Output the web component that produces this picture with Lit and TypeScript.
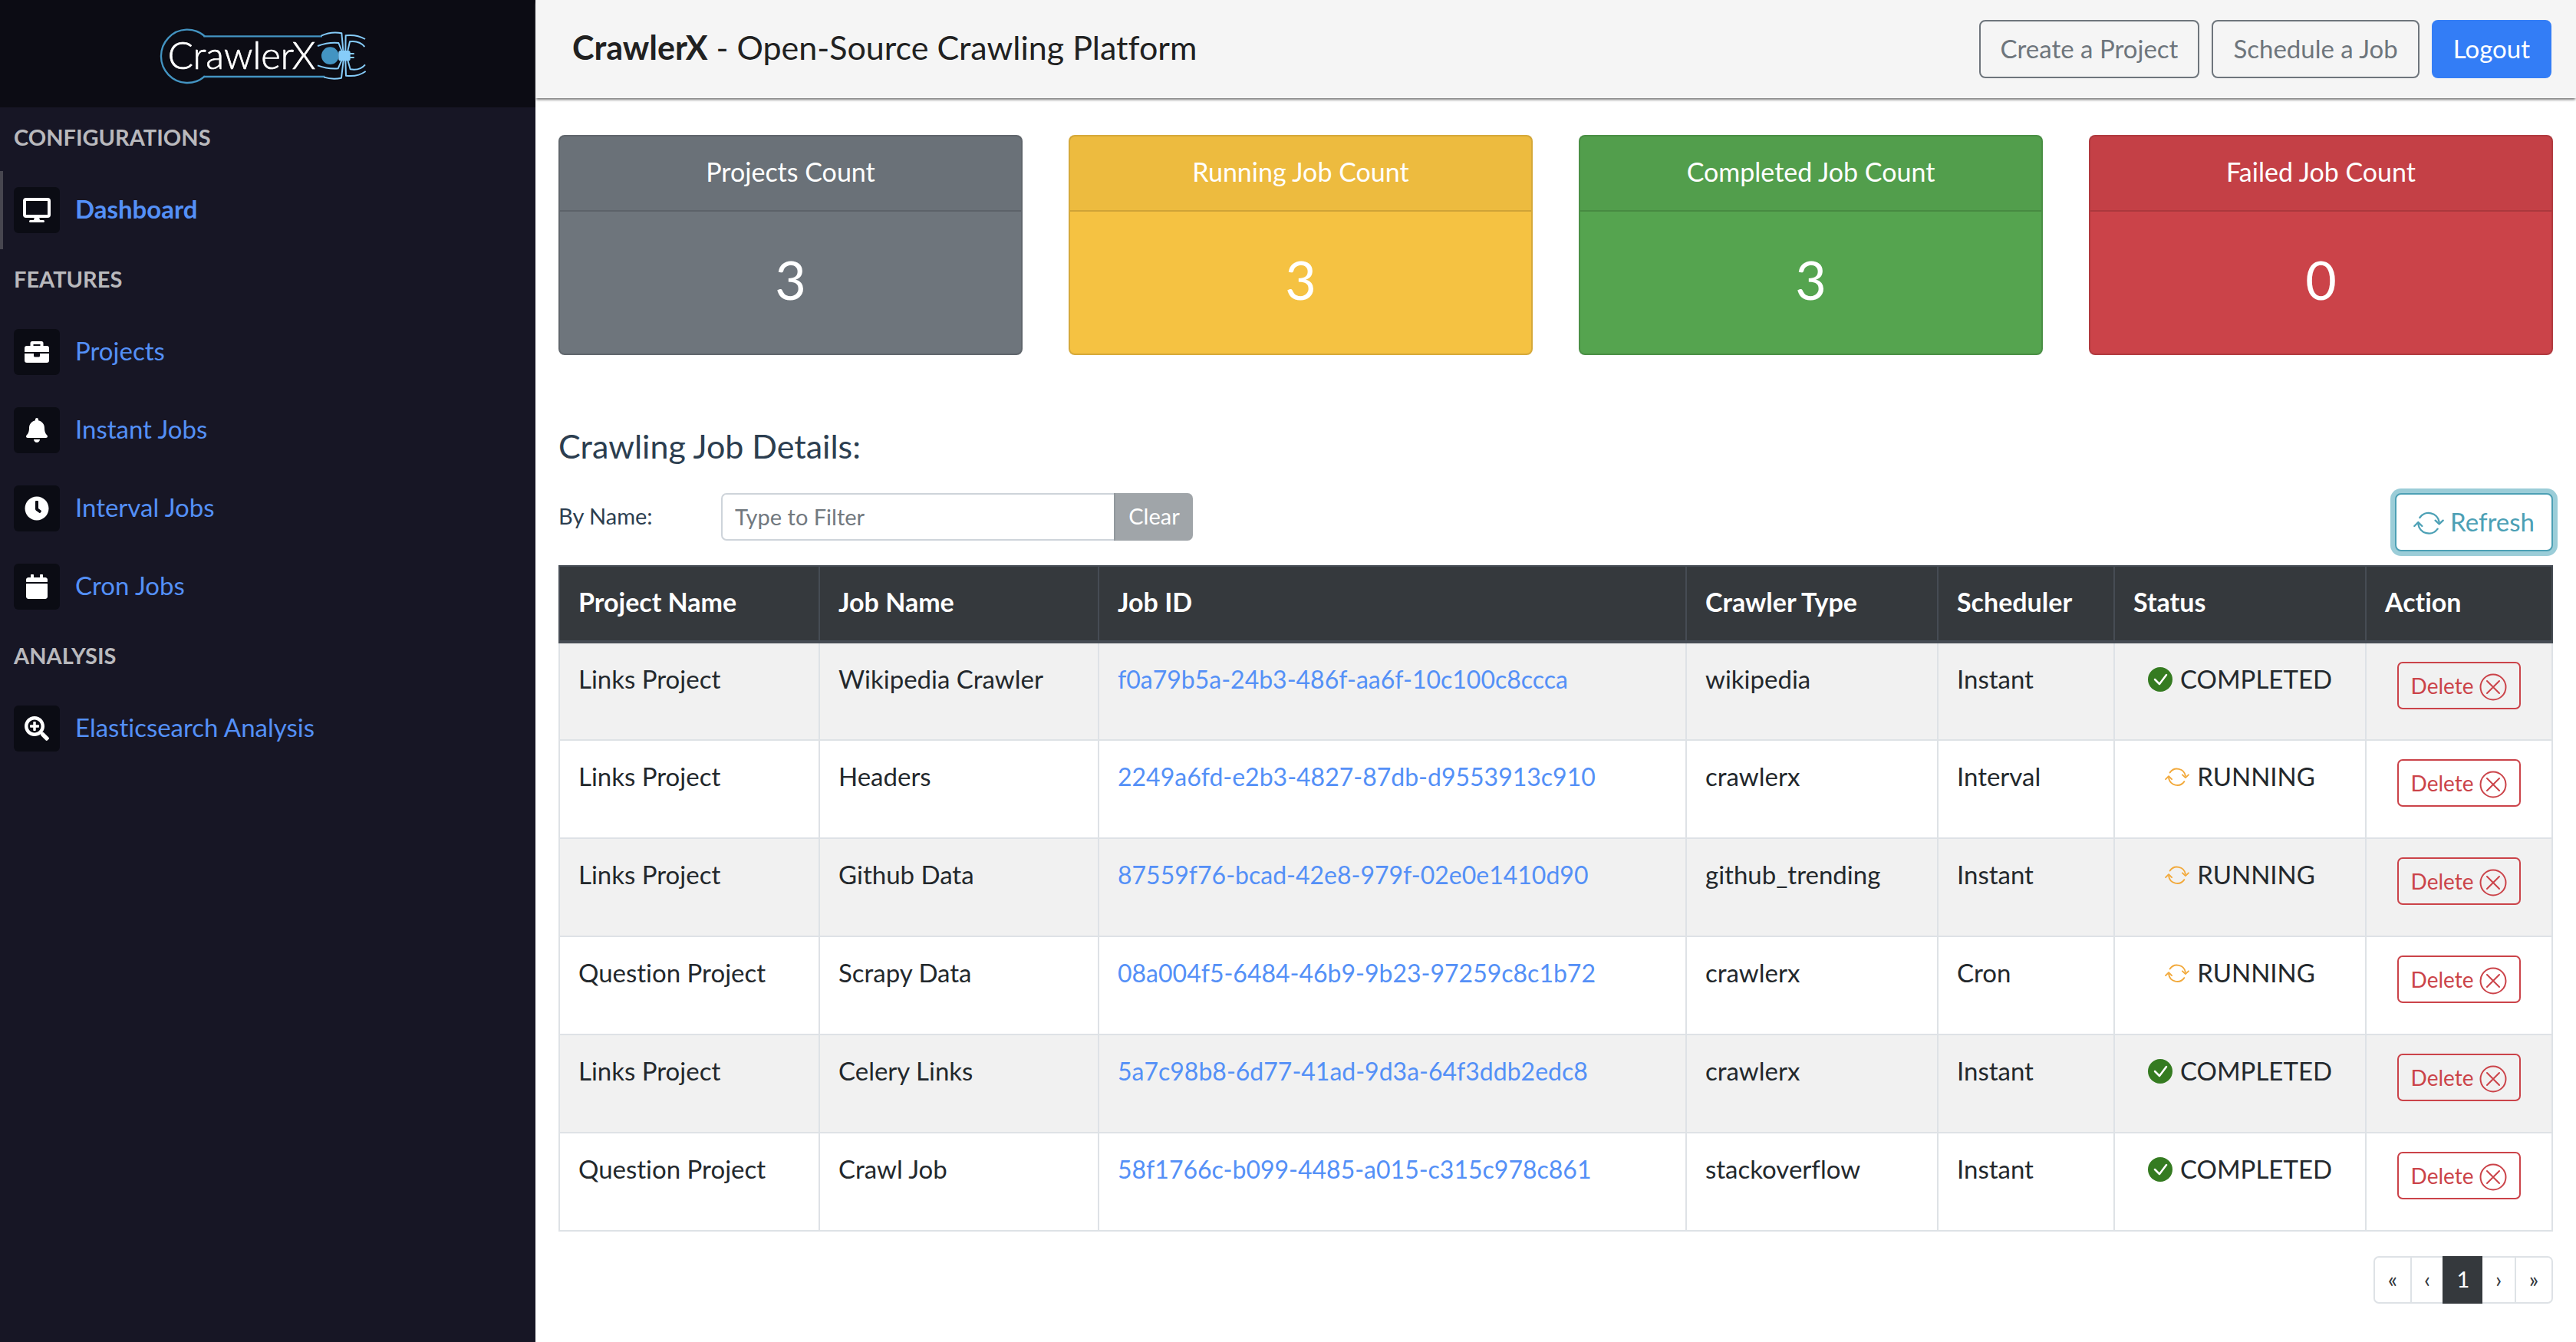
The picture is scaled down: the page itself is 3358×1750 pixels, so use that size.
import { LitElement, html, svg, css, nothing, type TemplateResult } from "lit";
import { customElement, property, state } from "lit/decorators.js";
import { classMap } from "lit/directives/class-map.js";

type Status = "COMPLETED" | "RUNNING";

interface Job {
  project: string;
  name: string;
  id: string;
  crawler: string;
  scheduler: string;
  status: Status;
}

interface MenuItem {
  label: string;
  icon: string;
  active?: boolean;
}

const MENU: { title: string; items: MenuItem[] }[] = [
  { title: "CONFIGURATIONS", items: [{ label: "Dashboard", icon: "desktop", active: true }] },
  {
    title: "FEATURES",
    items: [
      { label: "Projects", icon: "briefcase" },
      { label: "Instant Jobs", icon: "bell" },
      { label: "Interval Jobs", icon: "clock" },
      { label: "Cron Jobs", icon: "calendar" },
    ],
  },
  { title: "ANALYSIS", items: [{ label: "Elasticsearch Analysis", icon: "zoom" }] },
];

const CARDS = [
  { title: "Projects Count", count: 3, tone: "gray" },
  { title: "Running Job Count", count: 3, tone: "yellow" },
  { title: "Completed Job Count", count: 3, tone: "green" },
  { title: "Failed Job Count", count: 0, tone: "red" },
];

const JOBS: Job[] = [
  { project: "Links Project", name: "Wikipedia Crawler", id: "f0a79b5a-24b3-486f-aa6f-10c100c8ccca", crawler: "wikipedia", scheduler: "Instant", status: "COMPLETED" },
  { project: "Links Project", name: "Headers", id: "2249a6fd-e2b3-4827-87db-d9553913c910", crawler: "crawlerx", scheduler: "Interval", status: "RUNNING" },
  { project: "Links Project", name: "Github Data", id: "87559f76-bcad-42e8-979f-02e0e1410d90", crawler: "github_trending", scheduler: "Instant", status: "RUNNING" },
  { project: "Question Project", name: "Scrapy Data", id: "08a004f5-6484-46b9-9b23-97259c8c1b72", crawler: "crawlerx", scheduler: "Cron", status: "RUNNING" },
  { project: "Links Project", name: "Celery Links", id: "5a7c98b8-6d77-41ad-9d3a-64f3ddb2edc8", crawler: "crawlerx", scheduler: "Instant", status: "COMPLETED" },
  { project: "Question Project", name: "Crawl Job", id: "58f1766c-b099-4485-a015-c315c978c861", crawler: "stackoverflow", scheduler: "Instant", status: "COMPLETED" },
];

const COLUMNS = [
  { title: "Project Name", cls: "c-project" },
  { title: "Job Name", cls: "c-name" },
  { title: "Job ID", cls: "c-id" },
  { title: "Crawler Type", cls: "c-crawler" },
  { title: "Scheduler", cls: "c-scheduler" },
  { title: "Status", cls: "c-status" },
  { title: "Action", cls: "c-action" },
];

// Menu icons, drawn on a 60 × 60 tile.
const MENU_ICONS: Record<string, TemplateResult> = {
  desktop: svg`
    <rect x="14" y="16" width="32" height="22" rx="2" fill="none" stroke="#fff" stroke-width="4"/>
    <path fill="#fff" d="M27 39h6l1 4h4.500a1.500 1.500 0 0 1 0 3h-17a1.500 1.500 0 0 1 0-3H26z"/>`,
  briefcase: svg`
    <path fill="#fff" fill-rule="evenodd" d="M24 16h12a2.500 2.500 0 0 1 2.500 2.500V22H43a3 3 0 0 1 3 3v5H14v-5a3 3 0 0 1 3-3h4.500v-3.500A2.500 2.500 0 0 1 24 16zm1.500 4v2h9v-2z"/>
    <path fill="#fff" d="M14 32h12v3a1.500 1.500 0 0 0 1.500 1.500h5A1.500 1.500 0 0 0 34 35v-3h12v9a3 3 0 0 1-3 3H17a3 3 0 0 1-3-3z"/>`,
  bell: svg`<g transform="translate(16 14) scale(.0625)"><path fill="#fff" d="M224 512c35.320 0 63.970-28.650 63.970-64H160.030c0 35.350 28.650 64 63.970 64zm215.390-149.710c-19.320-20.760-55.470-51.990-55.470-154.290 0-77.700-54.480-139.900-127.940-155.160V32c0-17.670-14.320-32-31.980-32s-31.980 14.330-31.980 32v20.840C118.560 68.100 64.080 130.300 64.080 208c0 102.300-36.150 133.530-55.470 154.290-6 6.450-8.660 14.160-8.610 21.710.11 16.400 12.980 32 32.100 32h383.800c19.120 0 32-15.600 32.100-32 .05-7.550-2.610-15.270-8.610-21.710z"/></g>`,
  clock: svg`<g transform="translate(14 14) scale(.0625)"><path fill="#fff" d="M256 8C119 8 8 119 8 256s111 248 248 248 248-111 248-248S393 8 256 8zm92.490 313l-20 25a16 16 0 0 1-22.490 2.500l-67-49.720a40 40 0 0 1-15-31.230V112a16 16 0 0 1 16-16h32a16 16 0 0 1 16 16v144l58 42.500a16 16 0 0 1 2.490 22.500z"/></g>`,
  calendar: svg`<g transform="translate(16 14) scale(.0625)"><path fill="#fff" d="M12 192h424c6.600 0 12 5.400 12 12v260c0 26.500-21.500 48-48 48H48c-26.500 0-48-21.500-48-48V204c0-6.600 5.400-12 12-12zm436-44v-36c0-26.500-21.500-48-48-48h-48V12c0-6.600-5.400-12-12-12h-40c-6.600 0-12 5.400-12 12v52H160V12c0-6.600-5.400-12-12-12h-40c-6.600 0-12 5.400-12 12v52H48C21.500 64 0 85.500 0 112v36c0 6.600 5.400 12 12 12h424c6.600 0 12-5.400 12-12z"/></g>`,
  zoom: svg`<g transform="translate(14 14) scale(.0625)"><path fill="#fff" d="M304 192v32c0 6.600-5.400 12-12 12h-56v56c0 6.600-5.400 12-12 12h-32c-6.600 0-12-5.400-12-12v-56h-56c-6.600 0-12-5.400-12-12v-32c0-6.600 5.400-12 12-12h56v-56c0-6.600 5.400-12 12-12h32c6.600 0 12 5.400 12 12v56h56c6.600 0 12 5.400 12 12zm201 284.700L476.700 505c-9.400 9.400-24.600 9.400-33.900 0L343 405.300c-4.500-4.500-7-10.600-7-17V372c-35.300 27.600-79.700 44-128 44C93.100 416 0 322.900 0 208S93.100 0 208 0s208 93.100 208 208c0 48.300-16.400 92.700-44 128h16.300c6.400 0 12.500 2.500 17 7l99.700 99.700c9.300 9.400 9.300 24.600 0 34zM344 208c0-75.200-60.800-136-136-136S72 132.800 72 208s60.800 136 136 136 136-60.800 136-136z"/></g>`,
};

const refreshIcon = (cls: string) => html`
  <svg class=${cls} viewBox="0 0 120 120" fill="none" stroke="currentColor" stroke-width="7" stroke-linecap="round" stroke-linejoin="round" aria-hidden="true">
    <path d="M25 39A42 42 0 0 1 101 56M95 83A42 42 0 0 1 19 64"/>
    <path d="M86 50l15 14 15-14M4 72l15-15 15 15"/>
  </svg>`;

const checkIcon = html`
  <svg class="i32 ok" viewBox="0 0 32 32" aria-hidden="true">
    <circle cx="16" cy="16" r="16" fill="currentColor"/>
    <path d="M9 16l6 6 9-12" fill="none" stroke="#fff" stroke-width="2.500" stroke-linecap="round" stroke-linejoin="round"/>
  </svg>`;

const crossIcon = html`
  <svg class="i36" viewBox="0 0 36 36" fill="none" stroke="currentColor" stroke-width="2" stroke-linecap="round" aria-hidden="true">
    <circle cx="18" cy="18" r="16.500"/>
    <path d="M10 10l16 16M26 10l-16 16"/>
  </svg>`;

const BASE = css`
  *, *::before, *::after { box-sizing: border-box; }
  a { text-decoration: none; }
  button, input { font: inherit; margin: 0; }
  button { cursor: pointer; }
  svg { display: block; flex: none; }
`;

@customElement("side-menu")
export class SideMenu extends LitElement {
  static styles = [
    BASE,
    css`
      :host { display: block; background: #171625; }
      .brand { display: flex; justify-content: center; align-items: center; height: 140px; padding-right: 8px; background: #0c0c14; }
      .logo { width: 310px; height: 100px; }
      .wordmark { font-family: Lato, sans-serif; font-size: 147px; font-weight: 300; }
      .heading {
        margin: 0; height: 83px; padding: 18px 18px 0; font-size: 29px; line-height: 42px;
        font-weight: 700; color: #b9b9bd;
      }
      .list { margin: 0; padding: 0; list-style: none; }
      .item {
        display: flex; align-items: center; gap: 20px; height: 102px; padding: 0 14px;
        border-left: 4px solid transparent; font-size: 33px; line-height: 48px; color: #5490f7;
      }
      .item.active { border-left-color: #47464f; font-weight: 700; }
      .label { padding-bottom: 4px; }
      .tile { width: 60px; height: 60px; border-radius: 6px; background: #0b0c14; }
    `,
  ];

  render() {
    return html`
      <div class="brand">
        <svg class="logo" viewBox="0 0 930 300" role="img" aria-label="CrawlerX" fill="none" stroke-width="7">
          <g stroke="#4394c2">
            <path d="M231 82A103 104 0 1 0 231 238"/>
            <path d="M226 82H690M226 240H700"/>
          </g>
          <text class="wordmark" x="86" y="209" fill="#fff" stroke="#fff" stroke-width="2">CrawlerX</text>
          <circle cx="721" cy="158" r="34" fill="#4394c2"/>
          <g stroke="#86ccf9" stroke-width="6" stroke-linejoin="round">
            <path d="M686 80Q725 62 766 70L772 138"/>
            <path d="M672 120Q715 104 754 108L766 138"/>
            <path d="M858 93Q825 74 782 79L781 138"/>
            <path d="M856 123Q835 98 798 103L790 138"/>
            <path d="M697 242Q730 252 765 245L773 176"/>
            <path d="M672 196Q712 211 752 208L766 176"/>
            <path d="M860 219Q828 242 783 236L781 176"/>
            <path d="M858 193Q838 217 800 211L790 176"/>
            <path d="M798 150H815M798 165H815"/>
          </g>
          <rect x="754" y="138" width="46" height="40" rx="8" fill="#86ccf9"/>
        </svg>
      </div>
      <nav>
        ${MENU.map(
          (group) => html`
            <h2 class="heading">${group.title}</h2>
            <ul class="list">
              ${group.items.map(
                (item) => html`
                  <li>
                    <a class=${classMap({ item: true, active: !!item.active })} href="#" aria-current=${item.active ? "page" : nothing}>
                      <svg class="tile" viewBox="0 0 60 60" aria-hidden="true">${MENU_ICONS[item.icon]}</svg>
                      <span class="label">${item.label}</span>
                    </a>
                  </li>`,
              )}
            </ul>`,
        )}
      </nav>`;
  }
}

@customElement("count-card")
export class CountCard extends LitElement {
  @property() heading = "";
  @property() tone = "gray";
  @property({ type: Number }) count = 0;

  static styles = [
    BASE,
    css`
      :host { display: block; }
      .card { border: 2px solid rgba(0, 0, 0, 0.125); border-radius: 8px; color: #fff; text-align: center; }
      .gray { background: #6e757c; }
      .yellow { background: #f5c242; }
      .green { background: #55a44f; }
      .red { background: #cb4349; }
      .head {
        margin: 0; padding: 22px 24px 26px; background: rgba(0, 0, 0, 0.03);
        border-bottom: 2px solid rgba(0, 0, 0, 0.125); font-size: 34px; line-height: 48px; font-weight: 400;
      }
      .count { margin: 0; padding: 40px 24px 49px; font-size: 70px; line-height: 96px; }
    `,
  ];

  render() {
    return html`
      <section class="card ${this.tone}">
        <h2 class="head">${this.heading}</h2>
        <p class="count">${this.count}</p>
      </section>`;
  }
}

@customElement("jobs-table")
export class JobsTable extends LitElement {
  @property({ attribute: false }) jobs: Job[] = [];

  static styles = [
    BASE,
    css`
      :host { display: block; }
      table { width: 100%; border-collapse: collapse; table-layout: fixed; color: #23282c; }
      .c-project { width: 339px; }
      .c-name { width: 364px; }
      .c-crawler { width: 328px; }
      .c-scheduler { width: 230px; }
      .c-status { width: 328px; }
      .c-action { width: 243px; }
      th, td { padding: 24px; border: 2px solid #dee2e6; font-size: 33px; line-height: 44px; text-align: left; vertical-align: top; }
      th { background: #35393d; color: #fff; border-color: #464c54; border-bottom-width: 4px; font-size: 34px; font-weight: 700; }
      thead tr { height: 99px; }
      tbody tr { height: 128px; }
      tbody tr:nth-child(odd) { background: #f1f1f1; }
      .job-id { font-size: 32px; color: #5490f7; }
      td.center { text-align: center; }
      .status { display: inline-flex; gap: 10px; }
      .i32 { width: 32px; height: 32px; margin-top: 7px; }
      .i36 { width: 36px; height: 36px; }
      .ok { color: #357b21; }
      .busy { color: #f2a93b; }
      .delete {
        display: inline-flex; align-items: center; gap: 8px; height: 62px; padding: 0 16px;
        border: 2px solid #cb4349; border-radius: 7px; background: transparent; color: #cb4349;
        font-size: 28px; line-height: 42px;
      }
      .delete .i36 { margin-top: 4px; }
    `,
  ];

  render() {
    return html`
      <table>
        <colgroup>${COLUMNS.map((c) => html`<col class=${c.cls} />`)}</colgroup>
        <thead>
          <tr>${COLUMNS.map((c) => html`<th scope="col">${c.title}</th>`)}</tr>
        </thead>
        <tbody>
          ${this.jobs.map(
            (job) => html`
              <tr>
                <td>${job.project}</td>
                <td>${job.name}</td>
                <td><a class="job-id" href="#">${job.id}</a></td>
                <td>${job.crawler}</td>
                <td>${job.scheduler}</td>
                <td class="center">
                  <span class="status">
                    ${job.status === "COMPLETED" ? checkIcon : refreshIcon("i32 busy")}<span>${job.status}</span>
                  </span>
                </td>
                <td class="center"><button class="delete" type="button">Delete ${crossIcon}</button></td>
              </tr>`,
          )}
        </tbody>
      </table>`;
  }
}

@customElement("app-root")
export class AppRoot extends LitElement {
  @state() private filter = "";

  static styles = [
    BASE,
    css`
      :host {
        display: grid; grid-template-columns: 698px minmax(0, 1fr); min-height: 100vh; background: #fff;
        font-family: Lato, sans-serif; font-variant-ligatures: none; color: #2c3e50;
      }
      .topbar {
        display: flex; align-items: center; justify-content: space-between; height: 128px; padding: 0 32px 0 48px;
        background: #f5f5f5; box-shadow: 0 3px 3px -1px #777;
      }
      .title { margin: 0; padding-bottom: 4px; font-size: 43px; line-height: 60px; font-weight: 400; color: #212121; }
      .actions { display: flex; gap: 16px; }
      .btn {
        display: flex; align-items: center; justify-content: center; gap: 8px; height: 76px; padding: 0 26px 2px;
        border: 2px solid #6e757c; border-radius: 8px; background: transparent; color: #6e757c;
        font-size: 33px; line-height: 48px;
      }
      .btn.primary { border-color: #337df6; background: #337df6; color: #fff; }
      .btn.info { padding: 0 22px 2px; border-color: #4ca0b5; background: #fff; color: #4ca0b5; box-shadow: 0 0 0 6px #9bcdd8; }
      .i40 { width: 40px; height: 40px; margin-top: 4px; }
      .content { padding: 48px 30px; }
      .cards { display: grid; grid-template-columns: repeat(4, minmax(0, 1fr)); gap: 60px; }
      .section { margin: 95px 0 37px; font-size: 43px; line-height: 48px; font-weight: 400; }
      .tools { display: flex; justify-content: space-between; align-items: flex-start; margin-bottom: 18px; }
      .filter { display: flex; align-items: center; font-size: 29px; line-height: 42px; }
      .filter label { width: 212px; padding-bottom: 2px; }
      .query {
        width: 512px; height: 62px; padding: 0 16px 2px; border: 2px solid #ced4da; border-right: 0;
        border-radius: 7px 0 0 7px; background: #fff; color: #495057; outline: none;
      }
      .query::placeholder { color: #72797f; opacity: 1; }
      .clear {
        width: 103px; height: 62px; padding: 0 0 2px; border: 0; border-left: 2px solid #92989d;
        border-radius: 0 7px 7px 0; background: #a0a5a9; color: #fff;
      }
      .pages { display: flex; justify-content: flex-end; margin: 32px 0 0; padding: 0; list-style: none; }
      .page {
        display: flex; align-items: center; justify-content: center; width: 46px; height: 62px; padding: 0 0 2px;
        border: 2px solid #dee2e6; border-right: 0; background: #fff; color: #35393d; font-size: 29px; line-height: 42px;
      }
      .first .page { width: 48px; border-radius: 7px 0 0 7px; }
      .prev .page, .next .page { width: 42px; }
      .next .page { border-left: 0; }
      .last .page { width: 50px; border-right: 2px solid #dee2e6; border-radius: 0 7px 7px 0; }
      .current .page { width: 52px; border-color: #35393d; background: #35393d; color: #fff; }
    `,
  ];

  private onInput(e: Event) {
    this.filter = (e.target as HTMLInputElement).value;
  }

  render() {
    const query = this.filter.toLowerCase();
    const jobs = JOBS.filter((j) => j.name.toLowerCase().includes(query));
    const pages = [
      ["first", "«"],
      ["prev", "‹"],
      ["current", "1"],
      ["next", "›"],
      ["last", "»"],
    ];
    return html`
      <side-menu></side-menu>
      <div>
        <header class="topbar">
          <h1 class="title"><b>CrawlerX</b> - Open-Source Crawling Platform</h1>
          <div class="actions">
            <button class="btn" type="button">Create a Project</button>
            <button class="btn" type="button">Schedule a Job</button>
            <button class="btn primary" type="button">Logout</button>
          </div>
        </header>
        <main class="content">
          <div class="cards">
            ${CARDS.map((c) => html`<count-card .heading=${c.title} .tone=${c.tone} .count=${c.count}></count-card>`)}
          </div>
          <h2 class="section">Crawling Job Details:</h2>
          <div class="tools">
            <div class="filter">
              <label for="query">By Name:</label>
              <input class="query" id="query" type="text" placeholder="Type to Filter" .value=${this.filter} @input=${this.onInput} />
              <button class="clear" type="button" @click=${() => (this.filter = "")}>Clear</button>
            </div>
            <button class="btn info" type="button">${refreshIcon("i40")}Refresh</button>
          </div>
          <jobs-table .jobs=${jobs}></jobs-table>
          <ul class="pages">
            ${pages.map(([cls, label]) => html`<li class=${cls}><button class="page" type="button">${label}</button></li>`)}
          </ul>
        </main>
      </div>`;
  }
}
